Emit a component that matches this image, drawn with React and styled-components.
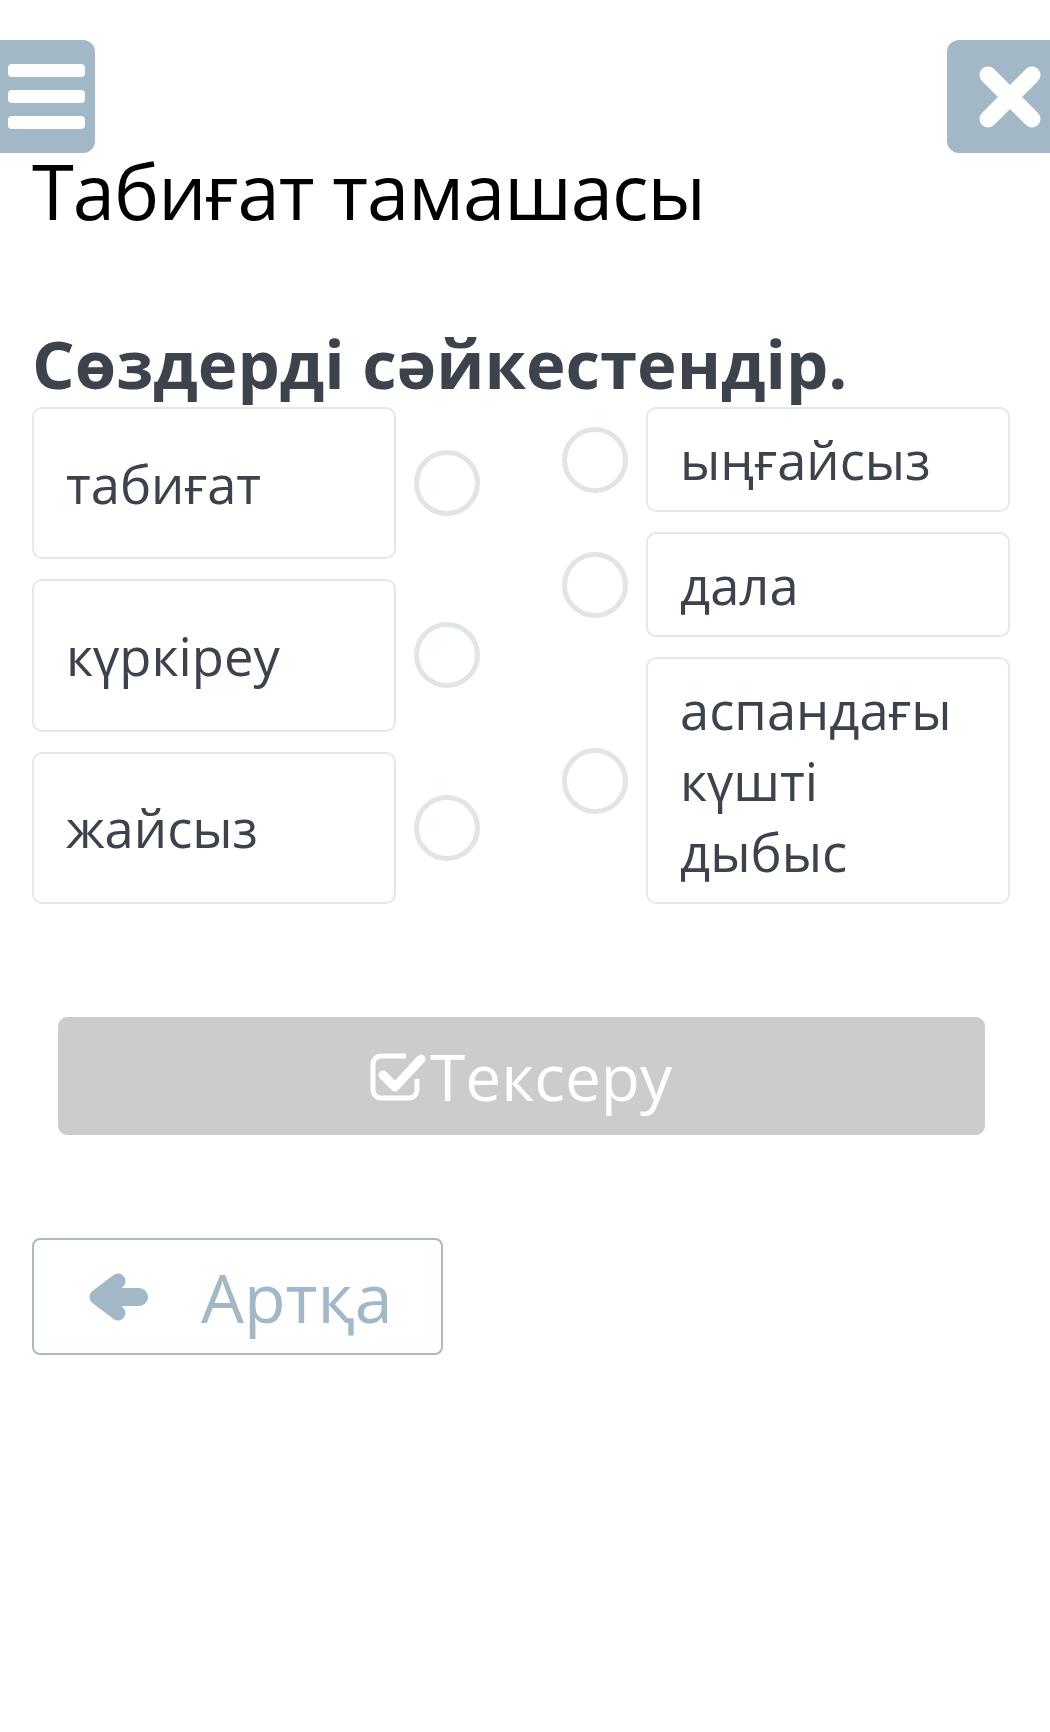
import React from "react";
import styled, { createGlobalStyle } from "styled-components";

const Global = createGlobalStyle`
  html, body { margin: 0; padding: 0; background: #fff; }
  body { font-family: "Open Sans", "Noto Sans", sans-serif; }
  * { box-sizing: border-box; }
`;

const Page = styled.div`
  width: 1050px;
  min-height: 1732px;
  background: #fff;
`;

const TopBar = styled.div`
  display: flex;
  justify-content: space-between;
  padding-top: 40px;
`;

const IconButton = styled.button`
  width: ${(p) => p.$w}px;
  height: 113px;
  border: none;
  background: #a3b8c6;
  border-radius: ${(p) => (p.$side === "left" ? "0 12px 12px 0" : "12px 0 0 12px")};
  display: flex;
  flex-direction: column;
  justify-content: center;
  align-items: ${(p) => (p.$side === "left" ? "flex-start" : "center")};
  gap: 13px;
  padding: 0 0 0 ${(p) => (p.$side === "left" ? 8 : 22)}px;
  cursor: pointer;
`;

const Bar = styled.span`
  display: block;
  width: 77px;
  height: 13px;
  border-radius: 4px;
  background: #fff;
`;

const Content = styled.div`
  padding: 0 40px 0 32px;
`;

const Title = styled.h1`
  margin: 0;
  font-family: "Open Sans", sans-serif;
  font-weight: 400;
  font-size: 76px;
  line-height: 1;
  letter-spacing: -1px;
  color: #000;
`;

const Heading = styled.h2`
  margin: 101px 0 0;
  font-family: "Open Sans", sans-serif;
  font-weight: 700;
  font-size: 67px;
  line-height: 1;
  color: #3d434d;
`;

const Board = styled.div`
  display: grid;
  grid-template-columns: 448px 448px;
  justify-content: space-between;
  margin-top: 10px;
`;

const Column = styled.div`
  display: flex;
  flex-direction: column;
  gap: 20px;
`;

const Row = styled.div`
  display: flex;
  align-items: center;
  gap: 18px;
  flex: ${(p) => (p.$grow ? 1 : "none")};
`;

const Card = styled.div`
  flex: 1;
  align-self: stretch;
  display: flex;
  align-items: center;
  border: 2px solid #e4e7eb;
  border-radius: 10px;
  padding: 15px 30px 15px 32px;
  font-family: "Open Sans", sans-serif;
  font-size: 52.5px;
  line-height: 71px;
  color: #3d434d;
  background: #fff;
`;

const Dot = styled.span`
  flex: none;
  width: 66px;
  height: 66px;
  border-radius: 50%;
  border: 5px solid #e1e4e8;
  background: #fff;
`;

const CheckButton = styled.button`
  display: flex;
  align-items: center;
  justify-content: center;
  gap: 2px;
  width: 927px;
  height: 118px;
  margin: 113px auto 0;
  border: none;
  border-radius: 9px;
  background: #cccccc;
  color: #fff;
  font-family: "Open Sans", sans-serif;
  font-size: 64px;
  cursor: default;
`;

const BackButton = styled.button`
  display: flex;
  align-items: center;
  gap: 52px;
  width: 411px;
  height: 117px;
  margin-top: 103px;
  padding: 0 0 0 53px;
  border: 2px solid #a9bac5;
  border-radius: 8px;
  background: #fff;
  color: #a3b8c6;
  font-family: "Open Sans", sans-serif;
  font-size: 68px;
  cursor: pointer;
`;

const CheckIcon = () => (
  <svg width="58" height="52" viewBox="0 0 58 52" aria-hidden="true">
    <path
      d="M36 6 H11 a8 8 0 0 0 -8 8 V40 a8 8 0 0 0 8 8 H39 a8 8 0 0 0 8 -8 V29"
      fill="none"
      stroke="#fff"
      strokeWidth="5"
    />
    <path
      d="M13 25 L25 37 L51 9"
      fill="none"
      stroke="#fff"
      strokeWidth="9"
      strokeLinecap="round"
      strokeLinejoin="round"
    />
  </svg>
);

const CloseIcon = () => (
  <svg width="62" height="62" viewBox="0 0 62 62" aria-hidden="true">
    <path
      d="M9 9 L53 53 M53 9 L9 53"
      stroke="#fff"
      strokeWidth="17"
      strokeLinecap="round"
    />
  </svg>
);

const BackIcon = () => (
  <svg width="62" height="48" viewBox="0 0 62 48" aria-hidden="true">
    <path
      d="M31 8 L10 24 L31 40"
      fill="none"
      stroke="currentColor"
      strokeWidth="15"
      strokeLinecap="round"
      strokeLinejoin="round"
    />
    <path d="M14 24 H52" stroke="currentColor" strokeWidth="18" strokeLinecap="round" />
  </svg>
);

export default function App() {
  const left = ["табиғат", "күркіреу", "жайсыз"];
  const right = ["ыңғайсыз", "дала", "аспандағы күшті дыбыс"];
  return (
    <Page>
      <Global />
      <TopBar>
        <IconButton $w={95} $side="left" aria-label="menu">
          <Bar />
          <Bar />
          <Bar />
        </IconButton>
        <IconButton $w={103} $side="right" aria-label="close">
          <CloseIcon />
        </IconButton>
      </TopBar>
      <Content>
        <Title>Табиғат тамашасы</Title>
        <Heading>Сөздерді сәйкестендір.</Heading>
        <Board>
          <Column>
            {left.map((w) => (
              <Row key={w} $grow>
                <Card>{w}</Card>
                <Dot />
              </Row>
            ))}
          </Column>
          <Column>
            {right.map((w) => (
              <Row key={w}>
                <Dot />
                <Card>{w}</Card>
              </Row>
            ))}
          </Column>
        </Board>
        <CheckButton>
          <CheckIcon />
          Тексеру
        </CheckButton>
        <BackButton>
          <BackIcon />
          Артқа
        </BackButton>
      </Content>
    </Page>
  );
}
